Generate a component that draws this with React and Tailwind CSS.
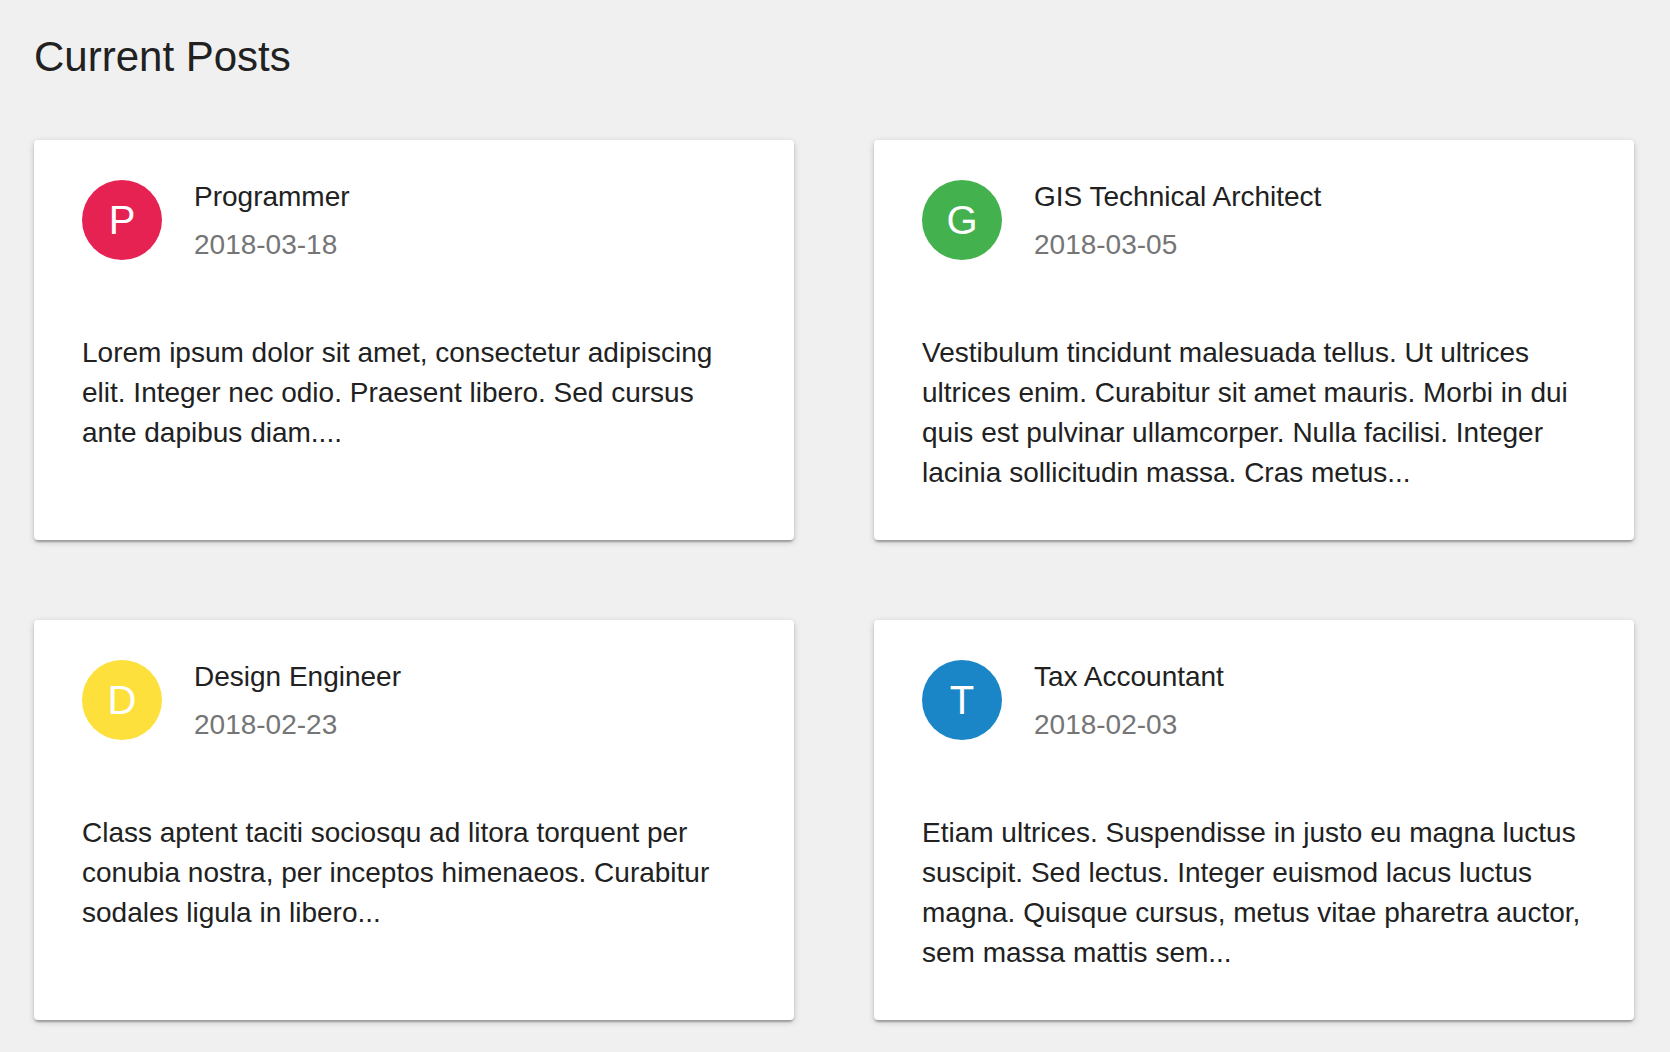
const posts = [
  {
    initial: "P",
    color: "bg-[#e62252]",
    title: "Programmer",
    date: "2018-03-18",
    body: "Lorem ipsum dolor sit amet, consectetur adipiscing elit. Integer nec odio. Praesent libero. Sed cursus ante dapibus diam....",
  },
  {
    initial: "G",
    color: "bg-[#44b14f]",
    title: "GIS Technical Architect",
    date: "2018-03-05",
    body: "Vestibulum tincidunt malesuada tellus. Ut ultrices ultrices enim. Curabitur sit amet mauris. Morbi in dui quis est pulvinar ullamcorper. Nulla facilisi. Integer lacinia sollicitudin massa. Cras metus...",
  },
  {
    initial: "D",
    color: "bg-[#fde03b]",
    title: "Design Engineer",
    date: "2018-02-23",
    body: "Class aptent taciti sociosqu ad litora torquent per conubia nostra, per inceptos himenaeos. Curabitur sodales ligula in libero...",
  },
  {
    initial: "T",
    color: "bg-[#1a86c8]",
    title: "Tax Accountant",
    date: "2018-02-03",
    body: "Etiam ultrices. Suspendisse in justo eu magna luctus suscipit. Sed lectus. Integer euismod lacus luctus magna. Quisque cursus, metus vitae pharetra auctor, sem massa mattis sem...",
  },
];

// One post card: avatar + title/date header, then the excerpt
function PostCard({ post }) {
  return (
    <div className="bg-white rounded-[4px] shadow-[0_2px_6px_rgba(0,0,0,0.2),0_2px_2px_rgba(0,0,0,0.14),0_4px_2px_-2px_rgba(0,0,0,0.12)] px-[48px] pt-[40px] pb-[47px]">
      {/* header row is avatar-high; the two text lines overflow it evenly */}
      <div className="flex items-center h-[80px]">
        <div
          className={`w-[80px] h-[80px] rounded-full flex items-center justify-center text-white text-[40px] flex-shrink-0 ${post.color}`}
        >
          {post.initial}
        </div>
        <div className="ml-[32px] pt-[2px]">
          <p className="text-[28px] leading-[48px] text-[#212121]">{post.title}</p>
          <p className="text-[28px] leading-[48px] text-[#757575]">{post.date}</p>
        </div>
      </div>
      <p className="mt-[73px] text-[28px] leading-[40px] text-[#212121]">{post.body}</p>
    </div>
  );
}

export default function App() {
  return (
    <div
      className="min-h-screen bg-[#f0f0f0] pl-[34px] pr-[36px] pt-[33px] pb-[32px]"
      style={{ fontFamily: '"Liberation Sans", Arial, sans-serif' }}
    >
      <h1 className="text-[42px] leading-[48px] text-[#212121] font-normal">Current Posts</h1>
      <div className="mt-[59px] grid grid-cols-2 gap-x-[80px] gap-y-[80px]">
        {posts.map((post) => (
          <PostCard key={post.title} post={post} />
        ))}
      </div>
    </div>
  );
}
